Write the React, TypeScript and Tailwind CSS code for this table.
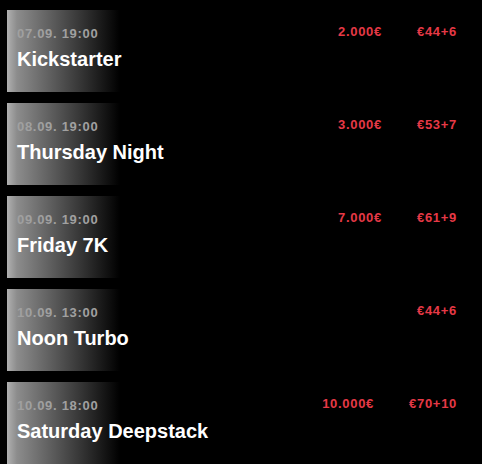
import React from "react";

type Tournament = {
  date: string;
  name: string;
  prize?: string;
  buyin: string;
};

const tournaments: Tournament[] = [
  { date: "07.09. 19:00", name: "Kickstarter", prize: "2.000€", buyin: "€44+6" },
  { date: "08.09. 19:00", name: "Thursday Night", prize: "3.000€", buyin: "€53+7" },
  { date: "09.09. 19:00", name: "Friday 7K", prize: "7.000€", buyin: "€61+9" },
  { date: "10.09. 13:00", name: "Noon Turbo", buyin: "€44+6" },
  { date: "10.09. 18:00", name: "Saturday Deepstack", prize: "10.000€", buyin: "€70+10" },
];

const Row = ({ t }: { t: Tournament }) => {
  return (
    <div className="h-[82px] flex flex-row bg-[linear-gradient(to_right,#b0b0b0,#8c8c8c_10px,#000_113px)]">
      <div className="pl-[10px] pt-[16px]">
        <p className="text-[13px] leading-[16px] font-bold tracking-[0.7px] text-[#a0a0a0]">{t.date}</p>
        <p className="mt-[5px] text-[20px] leading-[24px] font-bold text-white">{t.name}</p>
      </div>
      <div className="ml-auto pr-[25px] pt-[14px] flex flex-row gap-[35px] text-[13px] leading-[16px] font-bold tracking-[0.7px] text-[#e63946]">
        {t.prize && <span>{t.prize}</span>}
        <span>{t.buyin}</span>
      </div>
    </div>
  );
};

const App = () => {
  return (
    <div
      className="w-[482px] h-[464px] bg-black pt-[10px] pl-[7px] flex flex-col gap-[11px] overflow-hidden"
      style={{ fontFamily: '"Liberation Sans", Arial, sans-serif' }}
    >
      {tournaments.map(t => (
        <Row key={t.name} t={t} />
      ))}
    </div>
  );
};

export default App;
